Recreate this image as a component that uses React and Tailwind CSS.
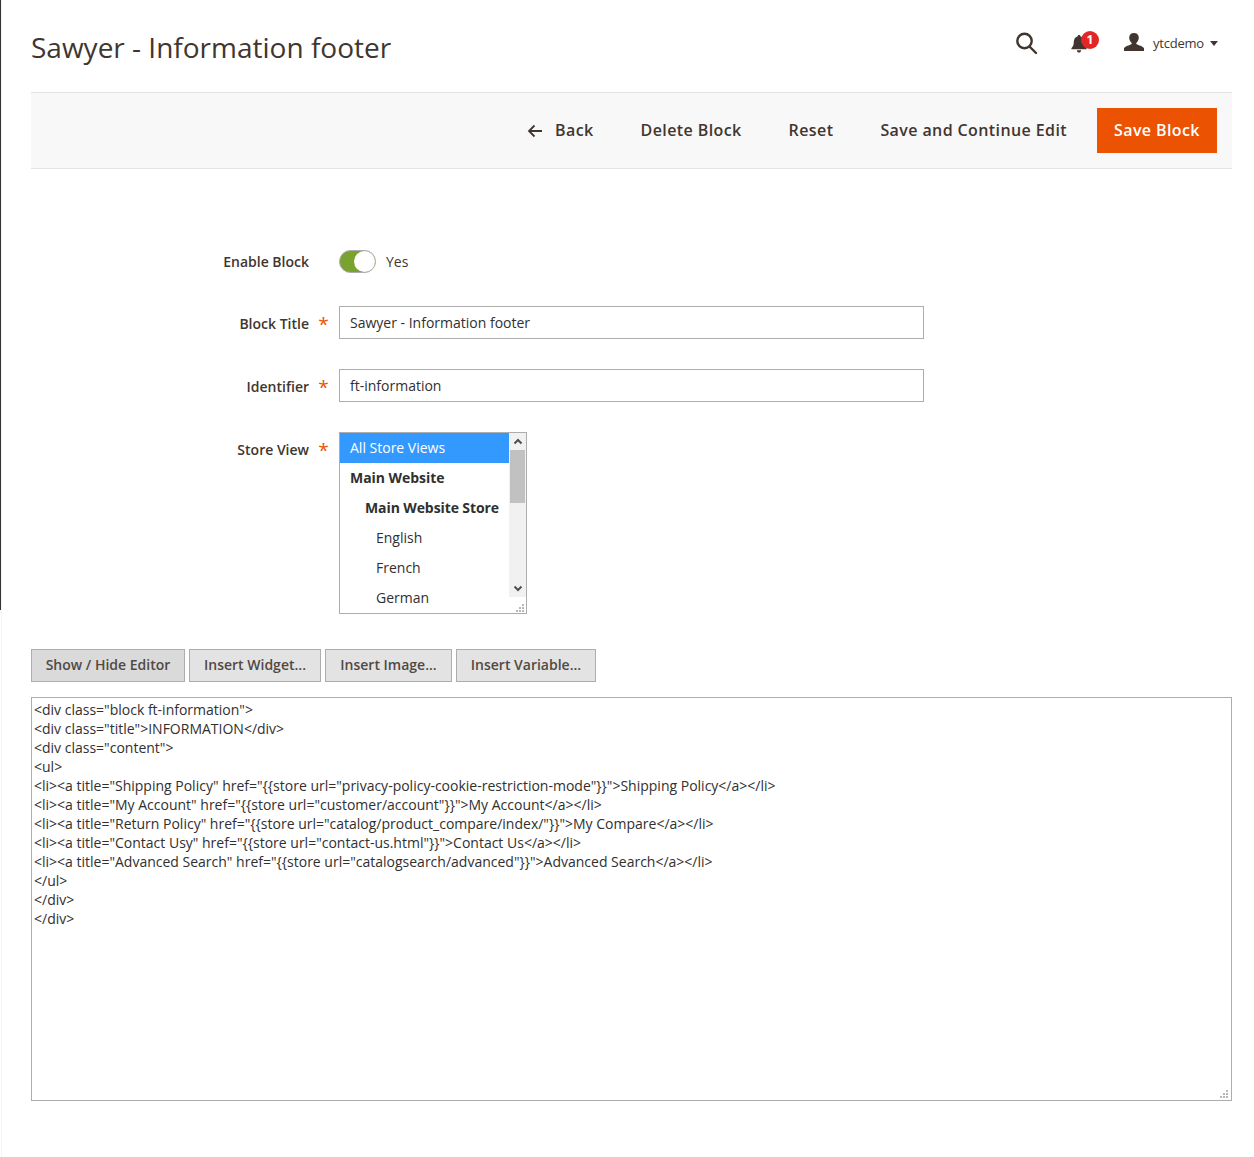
import React from "react";

const code = `<div class="block ft-information">
<div class="title">INFORMATION</div>
<div class="content">
<ul>
<li><a title="Shipping Policy" href="{{store url="privacy-policy-cookie-restriction-mode"}}">Shipping Policy</a></li>
<li><a title="My Account" href="{{store url="customer/account"}}">My Account</a></li>
<li><a title="Return Policy" href="{{store url="catalog/product_compare/index/"}}">My Compare</a></li>
<li><a title="Contact Usy" href="{{store url="contact-us.html"}}">Contact Us</a></li>
<li><a title="Advanced Search" href="{{store url="catalogsearch/advanced"}}">Advanced Search</a></li>
</ul>
</div>
</div>`;

function Label({ text, required, className = "" }) {
  return (
    <div className={"w-[308px] flex justify-end shrink-0 " + className}>
      <span className="font-semibold text-[14px] leading-[19px] text-[#41362f]">{text}</span>
      <span className="w-[30px] pr-[1px] text-center text-[#eb5202] text-[19px] leading-[19px] font-normal pt-[1px]">{required ? "*" : ""}</span>
    </div>
  );
}

function TextInput({ value }) {
  return (
    <div className="w-[585px] h-[33px] border border-[#adadad] bg-white px-[10px] text-[14px] leading-[31px] text-[#303030]">
      {value}
    </div>
  );
}

function ToolbarBtn({ children }) {
  return <span className="text-[16px] font-semibold tracking-[0.4px] text-[#41362f] leading-[22px] pb-[2px]">{children}</span>;
}

function EditorBtn({ children, active, w }) {
  return (
    <div className={"h-[33px] border border-[#adadad] flex items-center justify-center pb-[2px] text-[14px] font-semibold text-[#514943] " + w + " " + (active ? "bg-[#dadada]" : "bg-[#e3e3e3]")}>
      {children}
    </div>
  );
}

function Grip({ className }) {
  return (
    <svg width="8" height="8" viewBox="0 0 8 8" fill="#b8b8b8" className={"absolute " + className}>
      <rect x="6" y="0" width="2" height="2" />
      <rect x="3" y="3" width="2" height="2" />
      <rect x="6" y="3" width="2" height="2" />
      <rect x="0" y="6" width="2" height="2" />
      <rect x="3" y="6" width="2" height="2" />
      <rect x="6" y="6" width="2" height="2" />
    </svg>
  );
}

export default function App() {
  return (
    <div className="flex min-h-[1157px] bg-white" style={{ fontFamily: '"Open Sans", sans-serif' }}>
      <div className="w-[2px] border-r border-[#f4f4f4] shrink-0">
        <div className="w-[1px] h-[610px] bg-[#373330]" />
      </div>
      <div className="w-[1201px] ml-[29px] shrink-0">
        <header className="h-[92px] flex items-start justify-between">
          <h1 className="mt-[28px] text-[28px] leading-[38px] font-normal text-[#41362f]">Sawyer - Information footer</h1>
          <div className="flex items-start mt-[31px] mr-[14px] text-[#41362f]">
            <svg width="24" height="24" viewBox="0 0 24 24" fill="none" stroke="#41362f" strokeWidth="2.4">
              <circle cx="10.5" cy="10" r="7.2" />
              <path d="M15.5 15.5l6.5 6.5" strokeLinecap="round" />
            </svg>
            <div className="relative ml-[33px] w-[28px] h-[24px]">
              <svg width="16" height="18" viewBox="0 0 16 19" className="absolute left-0 top-[4px]" fill="#41362f">
                <path d="M8 0c1 0 1.6.7 1.6 1.5C12.300 2.300 13.500 4.500 13.500 7.500c0 3.500 1 5 2.500 6.500v1H0v-1c1.500-1.500 2.500-3 2.500-6.500C2.500 4.500 3.700 2.300 6.400 1.500 6.400.7 7 0 8 0zM5.800 16h4.400c0 1.500-1 2.500-2.200 2.500S5.800 17.500 5.800 16z" />
              </svg>
              <span className="absolute left-[10px] top-0 w-[18px] h-[18px] rounded-full bg-[#e22626] text-white text-[12px] font-bold leading-[18px] text-center">1</span>
            </div>
            <svg width="20" height="18" viewBox="0 0 20 20" preserveAspectRatio="none" fill="#41362f" className="ml-[25px] mt-[2px]">
              <path d="M10 0c3 0 4.800 2.200 4.800 5.300 0 2.300-1 4.300-2.300 5.500-.3.300-.3 1.400.2 1.800 1.600 1 6.300 2.300 7.300 4.400V20H0v-3c1-2.100 5.700-3.400 7.300-4.400.5-.4.500-1.500.2-1.800C6.200 9.600 5.200 7.600 5.200 5.300 5.200 2.200 7 0 10 0z" />
            </svg>
            <span className="ml-[9px] mt-[3px] text-[13px] tracking-[-0.2px] leading-[18px]">ytcdemo</span>
            <span className="ml-[6px] mt-[10px] w-0 h-0 border-x-[4.5px] border-x-transparent border-t-[5px] border-t-[#41362f]" />
          </div>
        </header>

        <div className="h-[77px] bg-[#f8f8f8] border-y border-[#e3e3e3] flex items-center justify-end pr-[15px]">
          <svg width="16" height="14" viewBox="0 0 16 14" fill="none" stroke="#41362f" strokeWidth="1.800" className="mr-[12px]">
            <path d="M15 7H2M7.500 1.500L2 7l5.500 5.500" />
          </svg>
          <ToolbarBtn>Back</ToolbarBtn>
          <span className="w-[47px]" />
          <ToolbarBtn>Delete Block</ToolbarBtn>
          <span className="w-[47px]" />
          <ToolbarBtn>Reset</ToolbarBtn>
          <span className="w-[47px]" />
          <ToolbarBtn>Save and Continue Edit</ToolbarBtn>
          <span className="w-[30px]" />
          <div className="w-[120px] h-[45px] bg-[#eb5202] text-white text-[16px] font-semibold tracking-[0.4px] flex items-center justify-center pb-[2px]">
            Save Block
          </div>
        </div>

        <div className="mt-[80px] flex items-center h-[24px]">
          <Label text="Enable Block" />
          <div className="w-[37px] h-[23px] rounded-full bg-[#79a22e] border border-[#adadad] flex justify-end">
            <span className="w-[21px] h-[21px] rounded-full bg-white" />
          </div>
          <span className="ml-[10px] text-[14px] text-[#41362f]">Yes</span>
        </div>

        <div className="mt-[33px] flex items-start">
          <Label text="Block Title" required className="pt-[8px]" />
          <TextInput value="Sawyer - Information footer" />
        </div>

        <div className="mt-[30px] flex items-start">
          <Label text="Identifier" required className="pt-[8px]" />
          <TextInput value="ft-information" />
        </div>

        <div className="mt-[30px] flex items-start">
          <Label text="Store View" required className="pt-[8px]" />
          <div className="relative w-[188px] h-[182px] border border-[#adadad] overflow-hidden flex bg-white text-[14px] text-[#303030]">
            <div className="w-[169px] shrink-0">
              <div className="h-[30px] leading-[30px] pl-[10px] bg-[#3399ff] text-white">All Store Views</div>
              <div className="h-[30px] leading-[30px] pl-[10px] font-bold tracking-[-0.05px]">Main Website</div>
              <div className="h-[30px] leading-[30px] pl-[25px] font-bold tracking-[-0.1px]">Main Website Store</div>
              <div className="h-[30px] leading-[30px] pl-[36px]">English</div>
              <div className="h-[30px] leading-[30px] pl-[36px]">French</div>
              <div className="h-[30px] leading-[30px] pl-[36px]">German</div>
            </div>
            <div className="w-[17px] h-[164px] bg-[#f1f1f1] flex flex-col items-center">
              <svg width="10" height="17" viewBox="0 0 10 17" fill="none" stroke="#505050" strokeWidth="2" className="shrink-0">
                <path d="M1.500 10.500L5 7l3.500 3.500" />
              </svg>
              <div className="w-[15px] h-[53px] bg-[#c1c1c1] mr-[1px]" />
              <div className="flex-1" />
              <svg width="10" height="17" viewBox="0 0 10 17" fill="none" stroke="#505050" strokeWidth="2" className="shrink-0">
                <path d="M1.500 6.500L5 10l3.500-3.500" />
              </svg>
            </div>
            <Grip className="right-[2px] bottom-[1px]" />
          </div>
        </div>

        <div className="mt-[35px] flex gap-[4px]">
          <EditorBtn active w="w-[154px]">Show / Hide Editor</EditorBtn>
          <EditorBtn w="w-[132px]">Insert Widget...</EditorBtn>
          <EditorBtn w="w-[127px]">Insert Image...</EditorBtn>
          <EditorBtn w="w-[140px]">Insert Variable...</EditorBtn>
        </div>

        <div className="relative mt-[15px] w-[1201px] h-[404px] border border-[#adadad] bg-white overflow-hidden pl-[2px] pt-[2px] text-[14px] leading-[19px] text-[#303030] whitespace-pre">
          {code}
          <Grip className="right-[3px] bottom-[2px]" />
        </div>
      </div>
    </div>
  );
}
